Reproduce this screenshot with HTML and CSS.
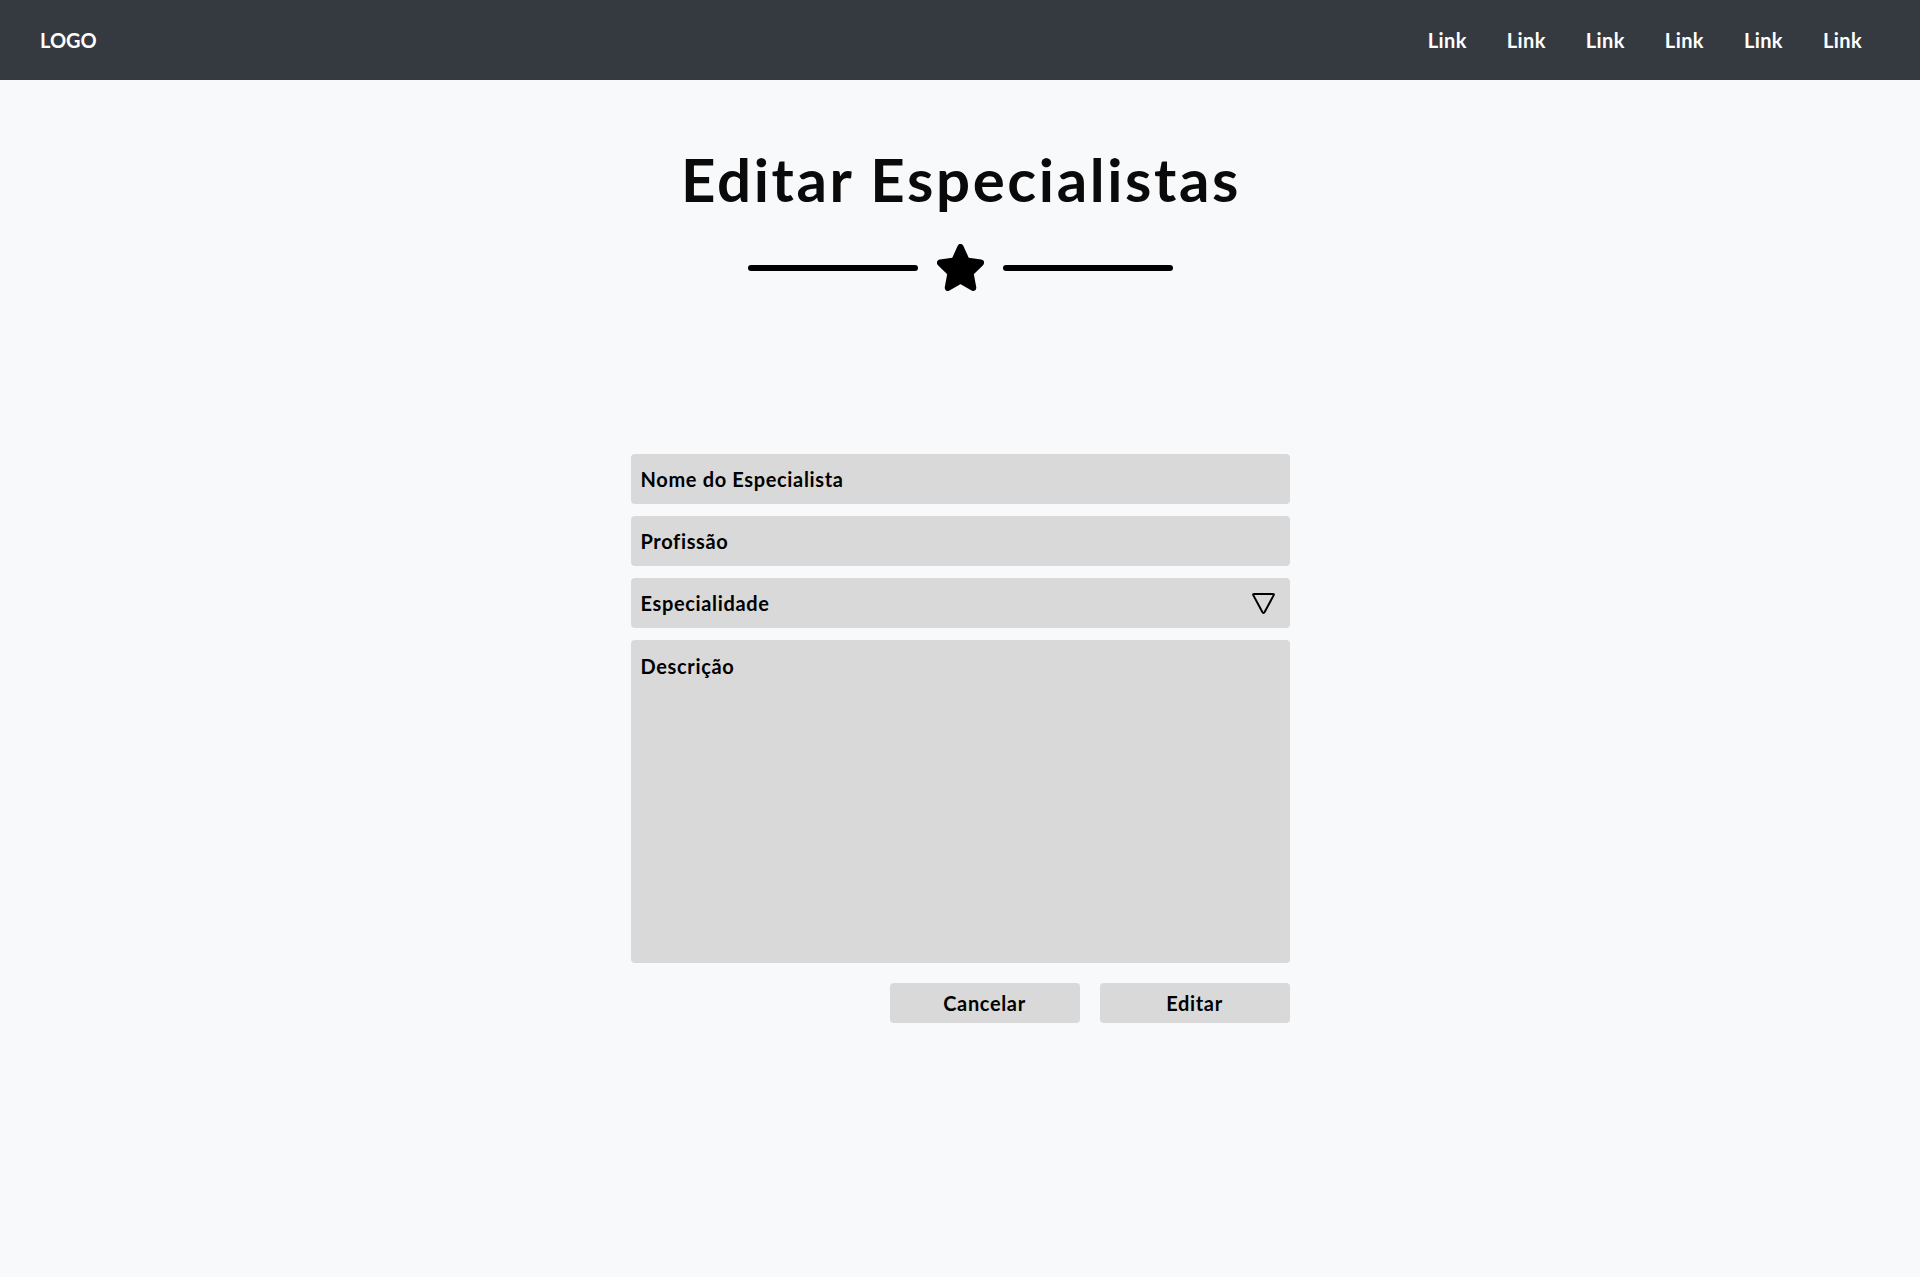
FILE: index.html
```html
<!DOCTYPE html>
<html lang="pt">
<head>
<meta charset="utf-8">
<title>Editar Especialistas</title>
<link rel="stylesheet" href="styles.css">
</head>
<body>
<header class="navbar">
  <div class="logo">LOGO</div>
  <nav class="links">
    <a href="#">Link</a>
    <a href="#">Link</a>
    <a href="#">Link</a>
    <a href="#">Link</a>
    <a href="#">Link</a>
    <a href="#">Link</a>
  </nav>
</header>
<main class="content">
  <h1 class="title">Editar Especialistas</h1>
  <div class="divider">
    <span class="line"></span>
    <svg class="star" width="47" height="47" viewBox="-22 -23 44 42.2" preserveAspectRatio="none">
      <polygon points="0,-20 5.7,-7.85 19.02,-6.18 9.2,3 11.76,16.18 0,9.7 -11.76,16.18 -9.2,3 -19.02,-6.18 -5.7,-7.85" fill="#000" stroke="#000" stroke-width="6" stroke-linejoin="round"/>
    </svg>
    <span class="line"></span>
  </div>
  <form class="form">
    <input class="field" type="text" placeholder="Nome do Especialista">
    <input class="field" type="text" placeholder="Profissão">
    <div class="field select">
      <span>Especialidade</span>
      <svg class="caret" width="25" height="23" viewBox="0 0 25 23">
        <path d="M3.2 2 H21.8 Q23.4 2 22.6 3.4 L13.8 19.8 Q12.5 22 11.2 19.8 L2.4 3.4 Q1.6 2 3.2 2 Z" fill="none" stroke="#000" stroke-width="2" stroke-linejoin="round"/>
      </svg>
    </div>
    <textarea class="field area" placeholder="Descrição"></textarea>
    <div class="actions">
      <button type="button" class="btn">Cancelar</button>
      <button type="button" class="btn">Editar</button>
    </div>
  </form>
</main>
</body>
</html>
```
FILE: styles.css
```css
* { box-sizing: border-box; }
html, body { margin: 0; padding: 0; }
body {
  background: #f8f9fa;
  font-family: Lato, "Noto Sans", sans-serif;
  font-weight: 700;
  color: #000;
  min-height: 1277px;
}
.navbar {
  height: 80px;
  background: #343a40;
  display: flex;
  align-items: center;
  justify-content: space-between;
  padding: 0 58px 0 40px;
}
.logo {
  color: #fff;
  font-size: 20px;
  font-weight: 700;
}
.links {
  display: flex;
  gap: 40px;
}
.links a {
  color: #fff;
  text-decoration: none;
  font-size: 20px;
  font-weight: 700;
  letter-spacing: 0.4px;
}
.content {
  display: flex;
  flex-direction: column;
  align-items: center;
}
.title {
  margin: 63px 0 0;
  padding-left: 2px;
  font-size: 60px;
  line-height: 72px;
  font-weight: 700;
  letter-spacing: 2.6px;
  color: #0a0a0a;
}
.divider {
  margin-top: 29px;
  display: flex;
  align-items: center;
  gap: 19px;
}
.line {
  width: 170px;
  height: 6px;
  background: #000;
  border-radius: 3px;
}
.star { display: block; }
.form {
  margin-top: 163px;
  width: 659px;
  display: flex;
  flex-direction: column;
  gap: 12px;
}
.field {
  display: block;
  width: 100%;
  height: 50px;
  background: #d9d9d9;
  border: none;
  border-radius: 4px;
  padding: 0 10px;
  font-family: inherit;
  font-size: 20px;
  font-weight: 700;
  letter-spacing: 0.65px;
  color: #000;
  outline: none;
}
.field::placeholder { color: #000; opacity: 1; }
.select {
  display: flex;
  align-items: center;
  justify-content: space-between;
  padding-right: 14px;
}
.caret { display: block; }
.area {
  height: 323px;
  padding: 14px 10px;
  resize: none;
  line-height: 1.2;
}
.actions {
  display: flex;
  justify-content: flex-end;
  gap: 20px;
  margin-top: 8px;
}
.btn {
  width: 190px;
  height: 40px;
  background: #d9d9d9;
  border: none;
  border-radius: 4px;
  font-family: inherit;
  font-size: 20px;
  font-weight: 700;
  letter-spacing: 0.65px;
  color: #000;
}
```
